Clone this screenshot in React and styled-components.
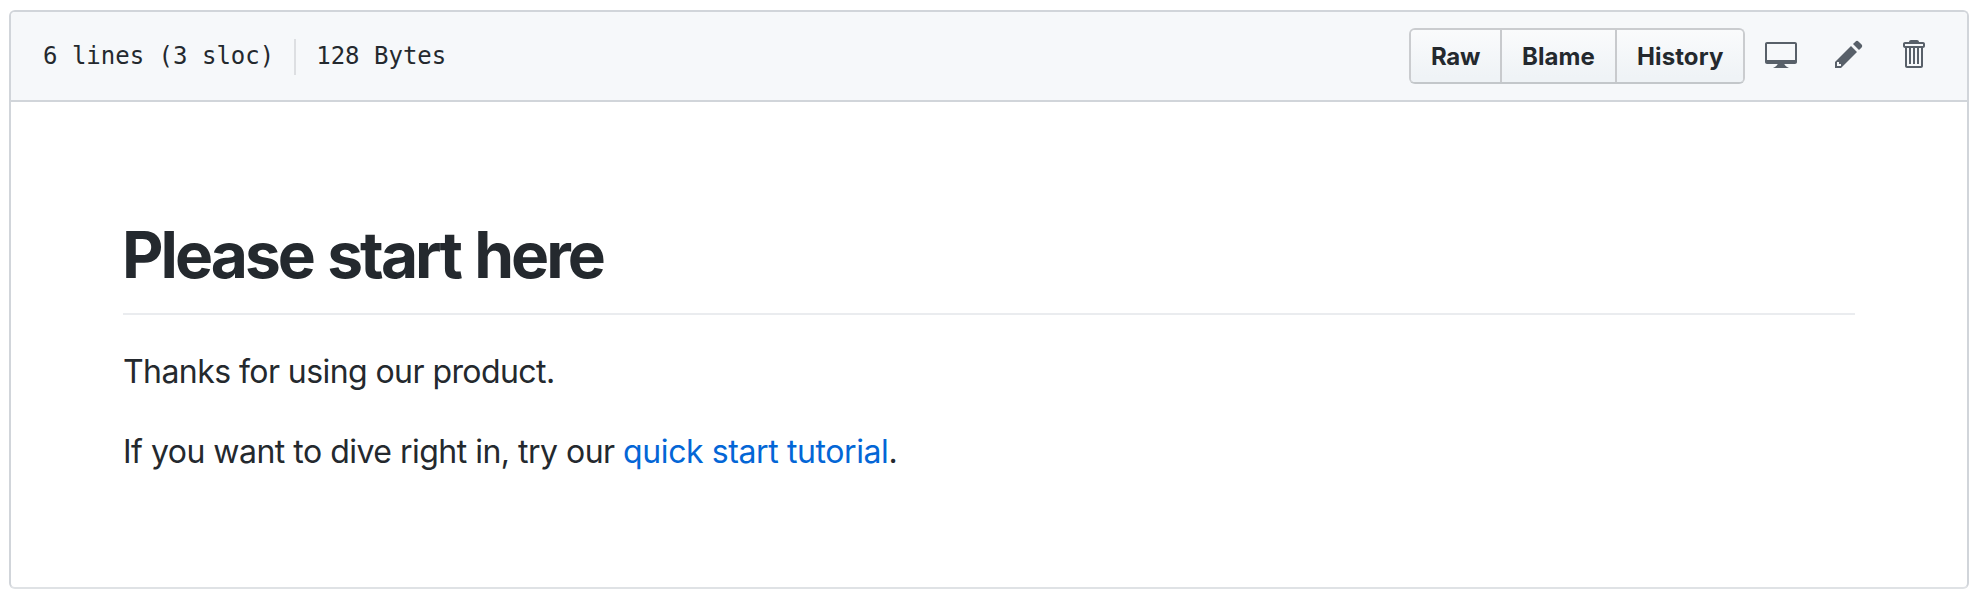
import React from "react";
import styled, { createGlobalStyle } from "styled-components";

const Global = createGlobalStyle`
  * { box-sizing: border-box; }
  body {
    margin: 0;
    background: #fff;
    color: #24292e;
    font-family: Inter, "Liberation Sans", sans-serif;
  }
`;

const Page = styled.main`
  padding: 10px 19px 15px 9px;
`;

const FileBox = styled.section`
  height: 579px;
  border: 2px solid #d1d5da;
  border-bottom-color: #dfe2e5;
  border-radius: 6px;
  overflow: hidden;
`;

const FileHeader = styled.header`
  display: flex;
  align-items: center;
  justify-content: space-between;
  height: 90px;
  padding: 0 42px 0 32px;
  background: #f6f8fa;
  border-bottom: 2px solid #d1d5da;
`;

const FileInfo = styled.div`
  display: flex;
  align-items: center;
  font: 24px/36px "DejaVu Sans Mono", "Liberation Mono", monospace;
  white-space: pre;
`;

const InfoDivider = styled.span`
  width: 2px;
  height: 36px;
  margin: 2px 20px 0;
  background: #dddfe2;
`;

const Actions = styled.div`
  display: flex;
  align-items: center;
`;

const ButtonGroup = styled.div`
  display: flex;
  height: 56px;
  margin-right: 20px;
  border: 2px solid #cacccf;
  border-bottom-color: #c3c7ca;
  border-radius: 6px;
  overflow: hidden;
`;

const Button = styled.button`
  width: ${(p) => p.$width}px;
  padding: 2px 0 0 20px;
  border: 0;
  background: linear-gradient(-180deg, #fafbfc 0%, #eff3f6 90%);
  color: inherit;
  font: 650 24px/50px Inter, "Liberation Sans", sans-serif;
  letter-spacing: ${(p) => p.$tracking}px;
  text-align: left;

  & + & {
    border-left: 2px solid #c8cacd;
  }
`;

const IconBar = styled.div`
  display: flex;
  gap: 38px;
  margin-bottom: 4px;
  color: #586069;
`;

const Icon = styled.svg`
  display: block;
  width: ${(p) => p.$width}px;
  height: 32px;
  fill: currentColor;
`;

const Markdown = styled.article`
  padding: 112px;
  font-size: 32px;
  font-weight: 430;
  line-height: 48px;
  white-space: nowrap;
`;

const Title = styled.h1`
  margin: 0 0 33px;
  padding-bottom: 17px;
  border-bottom: 2px solid #eaecef;
  font-size: 64px;
  font-weight: 650;
  line-height: 82px;
  letter-spacing: -2.95px;
  word-spacing: 2px;
  text-indent: -1px;
`;

const Paragraph = styled.p`
  margin: 0 0 32px;
  letter-spacing: ${(p) => p.$tracking}px;
`;

const Link = styled.a`
  color: #0366d6;
  letter-spacing: -0.4px;
  text-decoration: none;
`;

const buttons = [
  { label: "Raw", width: 89, tracking: -0.3 },
  { label: "Blame", width: 115, tracking: 0.05 },
  { label: "History", width: 128, tracking: 0.1 },
];

const icons = [
  {
    name: "Open in desktop",
    units: 16,
    path: "M15 2H1c-.55 0-1 .45-1 1v9c0 .55.45 1 1 1h5.34c-.25.61-.86 1.39-2.34 2h8c-1.48-.61-2.09-1.39-2.34-2H15c.55 0 1-.45 1-1V3c0-.55-.45-1-1-1zm0 9H1V3h14v8z",
  },
  {
    name: "Edit",
    units: 14,
    path: "M0 12v3h3l8-8-3-3-8 8zm3 2H1v-2h1v1h1v1zm10.3-9.3L12 6 9 3l1.3-1.3a.996.996 0 0 1 1.41 0l1.59 1.59c.39.39.39 1.02 0 1.41z",
  },
  {
    name: "Delete",
    units: 12,
    path: "M11 2H9c0-.55-.45-1-1-1H5c-.55 0-1 .45-1 1H2c-.55 0-1 .45-1 1v1c0 .55.45 1 1 1v9c0 .55.45 1 1 1h7c.55 0 1-.45 1-1V5c.55 0 1-.45 1-1V3c0-.55-.45-1-1-1zm-1 12H3V5h1v8h1V5h1v8h1V5h1v8h1V5h1v9zm1-10H2V3h9v1z",
  },
];

export default function App() {
  return (
    <Page>
      <Global />
      <FileBox>
        <FileHeader>
          <FileInfo>
            <span>6 lines (3 sloc)</span>
            <InfoDivider />
            <span>128 Bytes</span>
          </FileInfo>
          <Actions>
            <ButtonGroup>
              {buttons.map((b) => (
                <Button key={b.label} $width={b.width} $tracking={b.tracking}>
                  {b.label}
                </Button>
              ))}
            </ButtonGroup>
            <IconBar>
              {icons.map((i) => (
                <Icon key={i.name} $width={i.units * 2} viewBox={`0 0 ${i.units} 16`} aria-label={i.name}>
                  <path fillRule="evenodd" d={i.path} />
                </Icon>
              ))}
            </IconBar>
          </Actions>
        </FileHeader>
        <Markdown>
          <Title>Please start here</Title>
          <Paragraph $tracking={-0.567}>Thanks for using our product.</Paragraph>
          <Paragraph $tracking={-0.51}>
            If you want to dive right in, try our <Link>quick start tutorial</Link>.
          </Paragraph>
        </Markdown>
      </FileBox>
    </Page>
  );
}
